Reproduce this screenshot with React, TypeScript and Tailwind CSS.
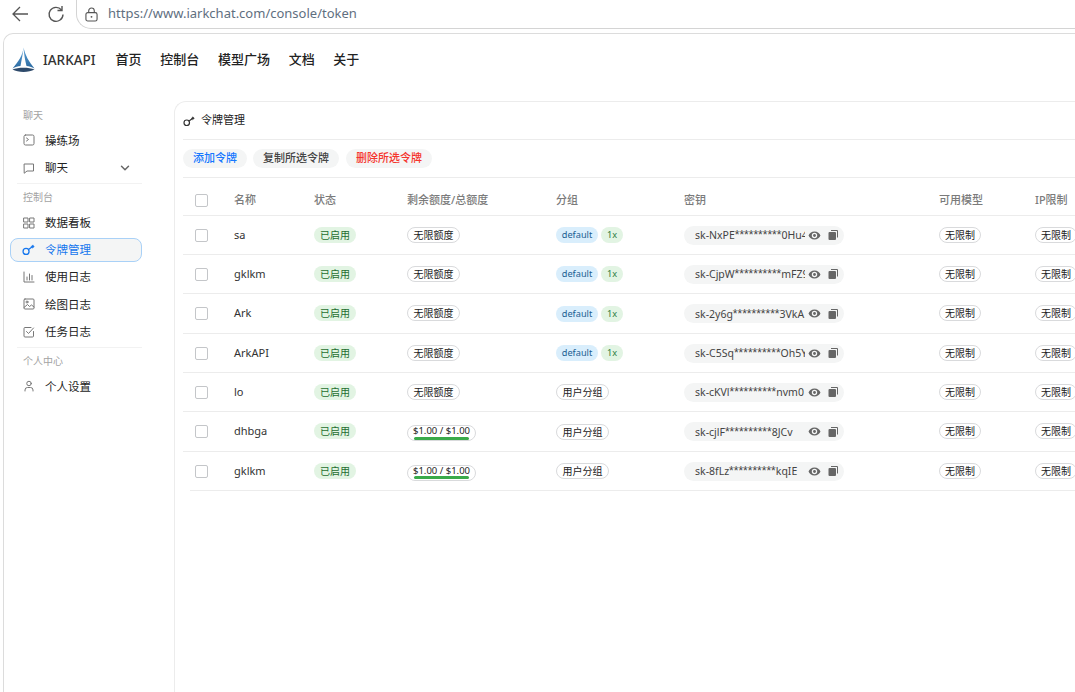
import React from "react";

const cols = "grid grid-cols-[51px_80px_93px_149px_128px_255px_96px_60px] items-center";

function Pill({ children, w, cls }: { children: React.ReactNode; w: string; cls: string }) {
  return <span className={`inline-flex h-4 items-center justify-center rounded-full leading-none whitespace-nowrap ${w} ${cls}`}>{children}</span>;
}
const Outline = ({ children, w }: { children: React.ReactNode; w: string }) => (
  <Pill w={w} cls="border border-[#d9dadc] bg-white text-[10px] text-[#222]">{children}</Pill>
);

const Check = () => <span className="block h-[13px] w-[13px] rounded-[2px] border border-[#c4c6c9] bg-white" />;

function Ico({ children, cls = "h-3 w-3 text-[#777]" }: { children: React.ReactNode; cls?: string }) {
  return (
    <svg viewBox="0 0 24 24" fill="none" stroke="currentColor" strokeWidth="2" strokeLinecap="round" strokeLinejoin="round" className={`shrink-0 ${cls}`}>
      {children}
    </svg>
  );
}

const KeyIcon = ({ cls }: { cls?: string }) => (
  <Ico cls={cls}>
    <circle cx="7.5" cy="15.5" r="5.5" strokeWidth="2.4" />
    <path d="M12 12 19 7" strokeWidth="2.4" />
    <path d="M17 6.500 20 3.500 22.500 7 19.500 9z" fill="currentColor" strokeWidth="1" />
  </Ico>
);

const icons: Record<string, React.ReactNode> = {
  play: (<><rect x="2" y="2" width="20" height="20" rx="3" /><path d="m7 8 4 3-4 3" /></>),
  chat: (<path d="M3 4h18v14H8l-5 4z" />),
  grid: (<><rect x="2" y="2" width="8" height="8" /><rect x="14" y="2" width="8" height="8" /><rect x="2" y="14" width="8" height="8" /><rect x="14" y="14" width="8" height="8" /></>),
  bars: (<path d="M2 2v20h20M8 18v-6M13 18V6M18 18v-9" />),
  image: (<><rect x="2" y="2" width="20" height="20" rx="2" /><circle cx="8" cy="8" r="2" /><path d="m2 19 7-6 4 4 4-3 5 4" /></>),
  task: (<><path d="M21 11v9a2 2 0 0 1-2 2H4a2 2 0 0 1-2-2V5a2 2 0 0 1 2-2h12" /><path d="m7 11 4 4 10-11" /></>),
  user: (<><circle cx="12" cy="7" r="4.5" /><path d="M4 22v-2a5 5 0 0 1 5-5h6a5 5 0 0 1 5 5v2" /></>),
};

function NavItem({ icon, label, chevron }: { icon: string; label: string; chevron?: boolean }) {
  return (
    <div className="flex h-[27.3px] items-center pl-[13px] pr-[10px] text-[11.5px] text-[#222]">
      <Ico>{icons[icon]}</Ico>
      <span className="ml-[10px] flex-1">{label}</span>
      {chevron && (
        <Ico cls="h-[14px] w-[14px] text-[#666]"><path d="m6 9 6 6 6-6" strokeWidth="2.5" /></Ico>
      )}
    </div>
  );
}

const Section = ({ children }: { children: React.ReactNode }) => (
  <div className="flex h-[22.700px] items-center pl-[13px] text-[10px] text-[#a3a3a3]">{children}</div>
);
const Divider = () => <div className="ml-[7px] mb-[2px] mt-[2px] border-t border-[#f2f2f2]" />;

const Eye = () => (
  <svg viewBox="0 0 24 24" className="h-[13px] w-[13px] text-[#666]" fill="currentColor">
    <path fillRule="evenodd" d="M12 4.500C6.500 4.500 2.400 8.300 1 12c1.400 3.700 5.500 7.500 11 7.500s9.600-3.800 11-7.500c-1.400-3.700-5.500-7.500-11-7.500ZM12 17a5 5 0 1 1 0-10 5 5 0 0 1 0 10Z" />
    <circle cx="12" cy="12" r="2.600" />
  </svg>
);
const Copy = () => (
  <svg viewBox="0 0 24 24" className="h-3 w-3 text-[#666]" fill="currentColor">
    <path d="M8 2h12a2 2 0 0 1 2 2v13h-2V4H8z" />
    <rect x="3" y="6" width="15" height="16" rx="2" />
  </svg>
);

type Row = { name: string; quota?: boolean; group: boolean; pre: string; post: string; h: string };
const rows: Row[] = [
  { name: "sa", group: true, pre: "sk-NxPE", post: "0Hu4", h: "h-[39px]" },
  { name: "gklkm", group: true, pre: "sk-CjpW", post: "mFZ9", h: "h-[39px]" },
  { name: "Ark", group: true, pre: "sk-2y6g", post: "3VkA", h: "h-[40px]" },
  { name: "ArkAPI", group: true, pre: "sk-C5Sq", post: "Oh5Y", h: "h-[39px]" },
  { name: "lo", group: false, pre: "sk-cKVl", post: "nvm0", h: "h-[39px]" },
  { name: "dhbga", quota: true, group: false, pre: "sk-cjlF", post: "8JCv", h: "h-[40px]" },
  { name: "gklkm", quota: true, group: false, pre: "sk-8fLz", post: "kqIE", h: "h-[39px]" },
];

export default function App() {
  return (
    <div className="flex h-[692px] w-[1075px] flex-col overflow-hidden bg-white text-[#222] [font-family:'Noto_Sans','Noto_Sans_CJK_SC',sans-serif]">
      {/* browser bar */}
      <div className="flex h-[33px] shrink-0 items-start">
        <svg viewBox="0 0 18 18" className="ml-[11px] mt-[5px] h-[18px] w-[18px] text-[#555]" fill="none" stroke="currentColor" strokeWidth="1.300">
          <path d="M17 9H2M9 2 2 9l7 7" />
        </svg>
        <svg viewBox="0 0 18 18" className="ml-[18px] mt-[5px] h-[18px] w-[18px] text-[#555]" fill="none" stroke="currentColor" strokeWidth="1.400">
          <path d="M14.500 5A7 7 0 1 0 16 9.500" />
          <path d="M15 1v4.500h-4.500" />
        </svg>
        <div className="ml-[11px] flex h-[29px] flex-1 items-center rounded-bl-[15px] border-b border-l border-[#d4d4d4] pl-[8px]">
          <svg viewBox="0 0 14 16" className="h-[15px] w-[13px] text-[#555]" fill="none" stroke="currentColor" strokeWidth="1.200">
            <rect x="1" y="6" width="12" height="9" rx="2" />
            <path d="M4 6V4a3 3 0 0 1 6 0v2" />
            <circle cx="7" cy="10.500" r="1" fill="currentColor" stroke="none" />
          </svg>
          <span className="ml-[10px] text-[13px] text-[#5f6f7f]">https://www.iarkchat.com/console/token</span>
        </div>
      </div>

      {/* page card */}
      <div className="ml-[3px] flex min-h-0 flex-1 flex-col rounded-tl-[10px] border-l border-t border-[#dcdcdc]">
        <header className="flex h-[52px] shrink-0 items-center pl-[8px]">
          <svg viewBox="0 0 23 26" className="h-[26px] w-[23px]">
            <defs>
              <linearGradient id="sail" x1="0" y1="0" x2="0" y2="1">
                <stop offset="0" stopColor="#5aa0d8" />
                <stop offset="1" stopColor="#2c6aa0" />
              </linearGradient>
            </defs>
            <path d="M11.500 0.500 C 11 8 6 15 0.500 21.500 C 3 20 6 19.300 8.500 19 C 9.500 13 11 7 11.500 0.500Z" fill="url(#sail)" />
            <path d="M11.500 0.500 C 13 8 17 15 22.500 21.500 C 19.500 20 17 19.300 14.500 19 C 13 13 12 7 11.500 0.500Z" fill="url(#sail)" />
            <path d="M0.500 22.500 C 6 20 17 20 22.500 22.500 C 17 25.800 6 25.800 0.500 22.500Z" fill="#2e4a6b" />
          </svg>
          <span className="ml-[8px] text-[13.500px] font-medium text-[#333]">IARKAPI</span>
          <nav className="ml-[20px] flex gap-[18.700px] text-[13px] font-medium text-[#222]">
            <span>首页</span><span>控制台</span><span>模型广场</span><span>文档</span><span>关于</span>
          </nav>
        </header>

        <div className="flex min-h-0 flex-1">
          <aside className="w-[170px] shrink-0 pt-[18px]">
            <div className="w-[138px] pl-[6px]">
              <Section>聊天</Section>
              <NavItem icon="play" label="操练场" />
              <NavItem icon="chat" label="聊天" chevron />
              <Divider />
              <Section>控制台</Section>
              <NavItem icon="grid" label="数据看板" />
              <div className="my-[1.500px] flex h-[24px] items-center rounded-[8px] border border-[#a9d1f7] bg-[#f4f5f5] pl-[11px] text-[11.500px] text-[#1677ee]">
                <KeyIcon cls="h-[13px] w-[13px] text-[#1677ee]" />
                <span className="ml-[10px]">令牌管理</span>
              </div>
              <NavItem icon="bars" label="使用日志" />
              <NavItem icon="image" label="绘图日志" />
              <NavItem icon="task" label="任务日志" />
              <Divider />
              <Section>个人中心</Section>
              <NavItem icon="user" label="个人设置" />
            </div>
          </aside>

          <main className="mt-[15px] min-w-0 flex-1 overflow-hidden rounded-tl-[12px] border-l border-t border-[#ececec]">
            <div className="pl-[8px]">
              <div className="flex h-[38px] items-center border-b border-[#ececec] text-[11px] text-[#222]">
                <KeyIcon cls="h-3 w-3 text-[#333]" />
                <span className="ml-[6px]">令牌管理</span>
              </div>
              <div className="flex h-[38px] items-center gap-[6px] border-b border-[#ececec] text-[11px] font-medium">
                <span className="flex h-[19px] w-[64px] items-center justify-center rounded-full bg-[#f4f5f5] text-[#1677ff]">添加令牌</span>
                <span className="flex h-[19px] w-[86px] items-center justify-center rounded-full bg-[#f4f5f5] text-[#444]">复制所选令牌</span>
                <span className="ml-[1px] flex h-[19px] w-[86px] items-center justify-center rounded-full bg-[#f4f5f5] text-[#f5342c]">删除所选令牌</span>
              </div>
              <div className={`${cols} h-[38px] border-b border-[#ececec] pt-[7px] text-[11px] font-medium text-[#7b7b7b]`}>
                <span className="pl-3"><Check /></span>
                <span>名称</span>
                <span>状态</span>
                <span>剩余额度/总额度</span>
                <span>分组</span>
                <span>密钥</span>
                <span>可用模型</span>
                <span>IP限制</span>
              </div>
              {rows.map((r, i) => (
                <div key={i} className={`${cols} ${r.h} border-b border-[#ececec] text-[11px] ${i === rows.length - 1 ? "ml-[7px] !grid-cols-[44px_80px_93px_149px_128px_255px_96px_60px]" : ""}`}>
                  <span className={i === rows.length - 1 ? "pl-[5px]" : "pl-3"}><Check /></span>
                  <span className="text-[#333]">{r.name}</span>
                  <span><Pill w="w-[42px]" cls="bg-[#e2f4e3] text-[10px] text-[#1f6d2f]">已启用</Pill></span>
                  <span>
                    {r.quota ? (
                      <span className="relative inline-flex h-4 w-[69px] items-start justify-center rounded-full border border-[#d9dadc] bg-white text-[9.500px] leading-[9px] text-[#222]">
                        $1.00 / $1.00
                        <span className="absolute bottom-[0.500px] left-[6px] h-[3px] w-[55px] rounded-full bg-[#3aaa4a]" />
                      </span>
                    ) : (
                      <Outline w="w-[53px]">无限额度</Outline>
                    )}
                  </span>
                  <span className="flex items-center gap-[3px]">
                    {r.group ? (
                      <>
                        <Pill w="w-[42px]" cls="bg-[#d9eefc] text-[9.200px] text-[#1c5f92]">default</Pill>
                        <Pill w="w-[22px]" cls="bg-[#e2f4e3] text-[9.200px] text-[#2f7d3f]">1x</Pill>
                      </>
                    ) : (
                      <Outline w="w-[53px]">用户分组</Outline>
                    )}
                  </span>
                  <span className="flex h-[19px] w-[160px] items-center rounded-full bg-[#f4f5f5] pl-[11px] text-[10.500px] text-[#444]">
                    <span className="w-[110px] overflow-hidden whitespace-nowrap">
                      {r.pre}
                      <span className="[font-family:'Liberation_Sans'] text-[12px]">**********</span>
                      {r.post}
                    </span>
                    <span className="ml-[3px]"><Eye /></span>
                    <span className="ml-[6px]"><Copy /></span>
                  </span>
                  <span><Outline w="w-[42px]">无限制</Outline></span>
                  <span><Outline w="w-[42px]">无限制</Outline></span>
                </div>
              ))}
            </div>
          </main>
        </div>
      </div>
    </div>
  );
}
